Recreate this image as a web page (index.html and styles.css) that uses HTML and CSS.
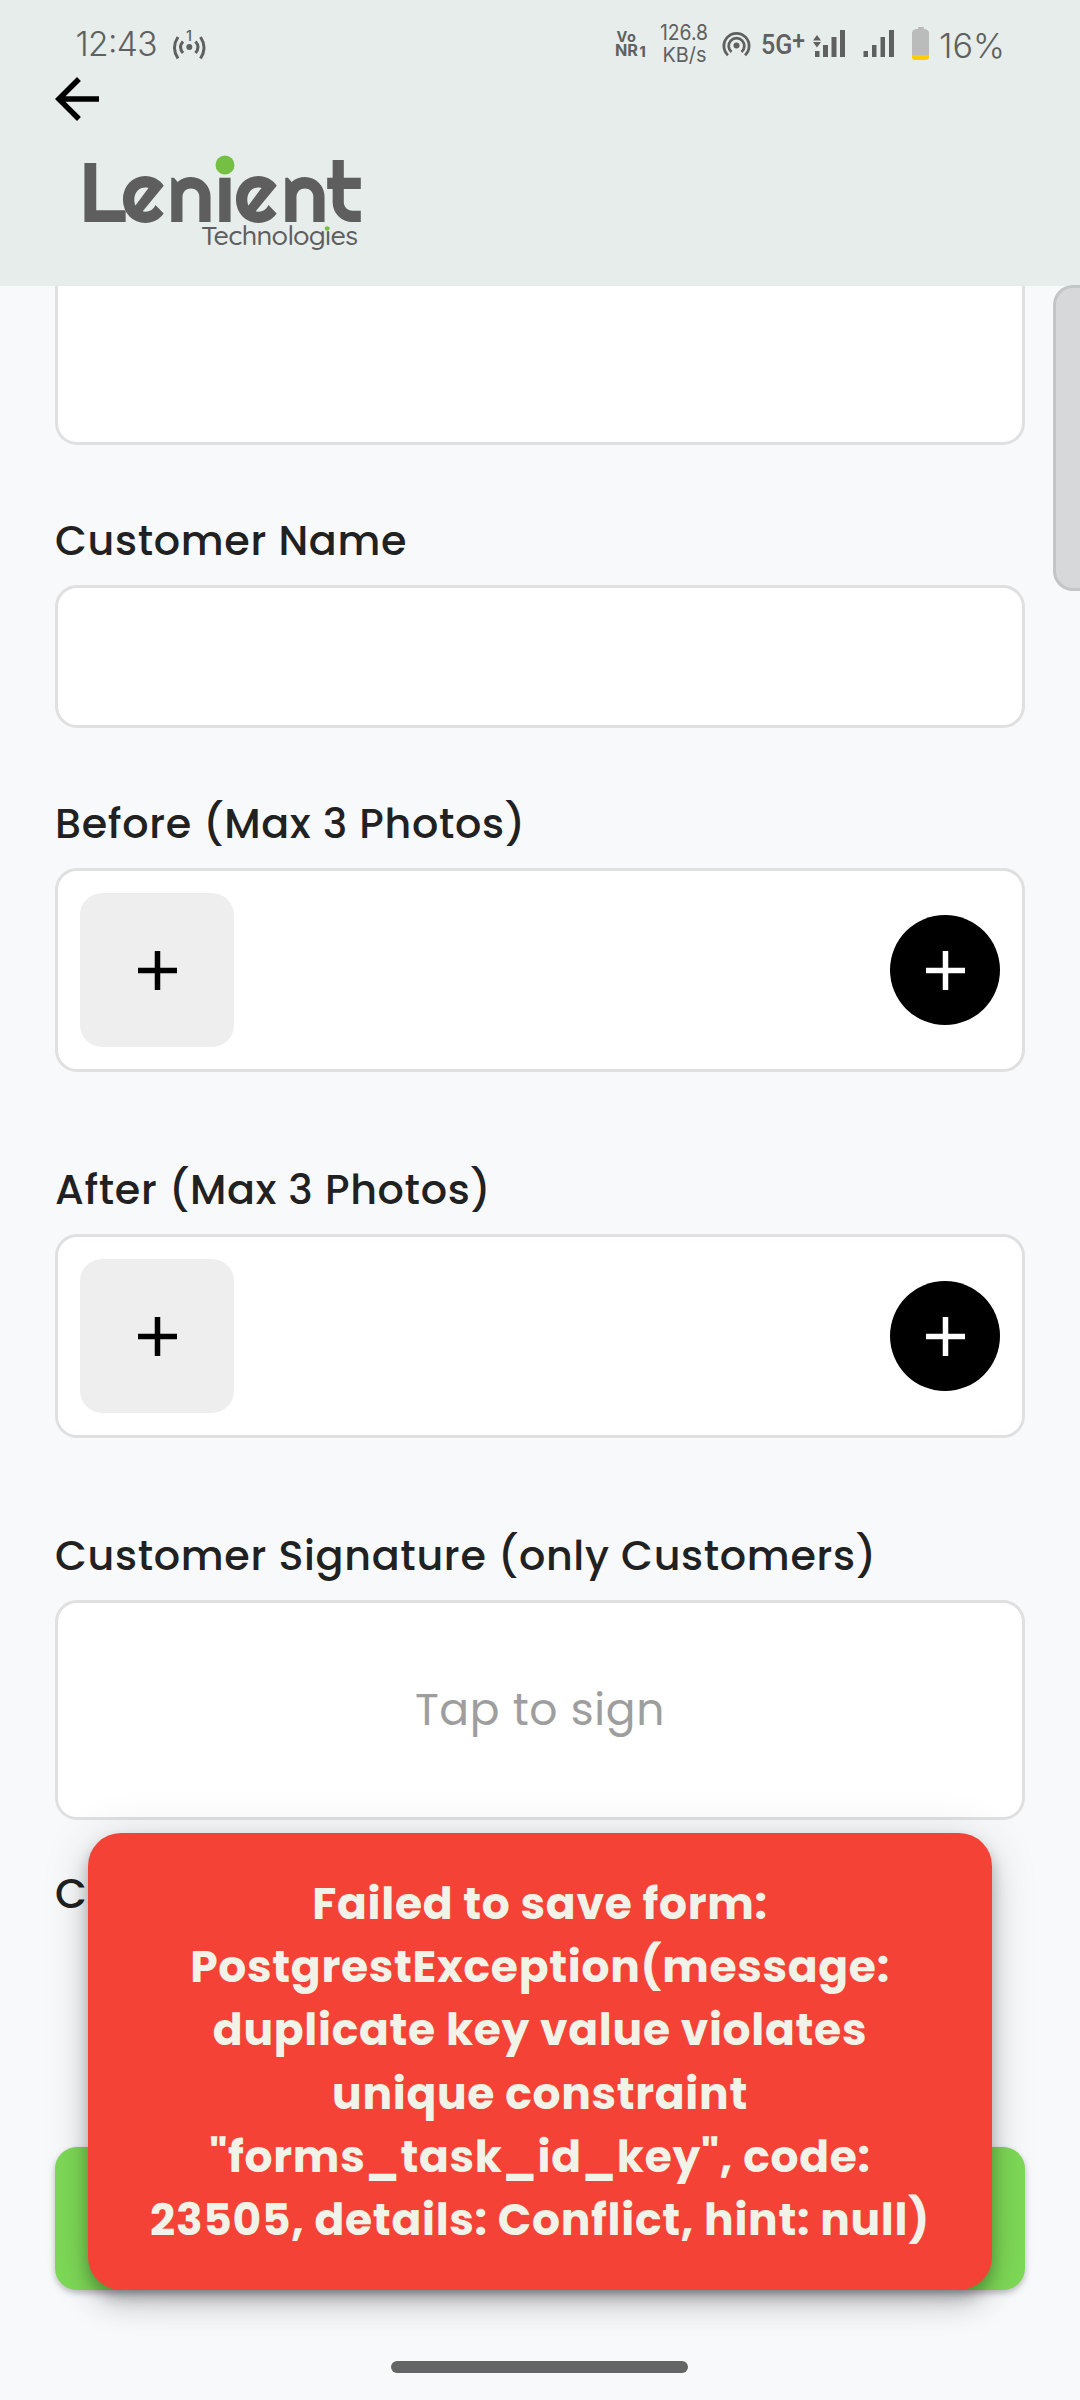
FILE: index.html
```html
<!DOCTYPE html>
<html lang="en">
<head>
<meta charset="utf-8">
<title>Lenient Technologies</title>
<link rel="stylesheet" href="styles.css">
</head>
<body>
<div class="screen">
  <header class="header">
    <div class="status">
      <svg class="status-left" width="150" height="66" viewBox="70 0 150 66">
        <text x="75.500" y="56" font-size="33.500" font-weight="300" textLength="82">12:43</text>
        <text x="189" y="41" font-size="14.500" font-weight="500" text-anchor="middle">1</text>
        <circle cx="189.300" cy="47" r="3"/>
        <g class="line" stroke-width="3">
          <path d="M183 41.500Q178 47 183 53M178 37Q171 47.500 178 58.500M195.500 41.500Q200.500 47 195.500 53M200.500 37Q207.500 47.500 200.500 58.500"/>
        </g>
      </svg>
      <svg class="status-right" width="400" height="66" viewBox="610 0 400 66">
        <text x="616.500" y="42" font-size="14.500" font-weight="700" textLength="19.500">Vo</text>
        <text x="615" y="56" font-size="15.500" font-weight="700" textLength="23" lengthAdjust="spacingAndGlyphs">NR</text>
        <text x="639.500" y="56.500" font-size="14" font-weight="800">1</text>
        <text x="660" y="40" font-size="21" textLength="48" lengthAdjust="spacingAndGlyphs">126.8</text>
        <text x="662.500" y="61.500" font-size="20.500" textLength="44" lengthAdjust="spacingAndGlyphs">KB/s</text>
        <circle cx="736.500" cy="45.500" r="3"/>
        <g class="line" stroke-width="2.800">
          <path d="M731.500 52A7.800 7.800 0 1 1 741.500 52M728 55.200A12.600 12.600 0 1 1 745 55.200"/>
        </g>
        <text class="network" x="761" y="53.500" font-size="28.500" font-weight="500" textLength="44" lengthAdjust="spacingAndGlyphs">5G<tspan dy="-5" font-size="26">+</tspan></text>
        <path d="M813 40.500l4-5.500 4 5.500zM813 42l4 5.500 4-5.500zM815 51h4.500v6h-4.500zM823 45h5v12h-5zM831.500 37h5v20h-5zM840 30h5v27h-5z"/>
        <path d="M863.500 51h4.500v6h-4.500zM872 45h4.500v12h-4.500zM880.500 37h4.500v20h-4.500zM889 30h5v27h-5z"/>
        <path class="battery" d="M918 28q0-1 1-1h4q1 0 1 1v1h1q4 1 4 4v22h-17v-22q0-3 4-4h2z"/>
        <path class="battery-level" d="M912 55h17v2q0 3-3 3h-11q-3 0-3-3z"/>
        <text x="939" y="58" font-size="33.500" font-weight="300" textLength="66" lengthAdjust="spacingAndGlyphs">16%</text>
      </svg>
    </div>
    <svg class="back" width="66" height="66" viewBox="0 0 24 24"><path d="M20 11H7.830l5.590-5.590L12 4l-8 8 8 8 1.410-1.410L7.830 13H20v-2z"/></svg>
    <svg class="logo" width="300" height="140" viewBox="70 132 300 140">
      <text class="logo-name" x="79 121 167 215 234 281 326" y="222">Lenient</text>
      <circle class="accent" cx="225" cy="165" r="9.500"/>
      <text class="logo-sub" x="201" y="245" textLength="157">Technologies</text>
      <circle class="accent" cx="327" cy="228.500" r="2.200"/>
    </svg>
  </header>

  <main class="form">
    <div class="box box-cut"></div>

    <section class="field">
      <div class="label">Customer Name</div>
      <div class="box box-input"></div>
    </section>

    <section class="field">
      <div class="label">Before (Max 3 Photos)</div>
      <div class="box photos">
        <div class="tile"><svg width="39" height="39" viewBox="0 0 39 39"><path d="M0 19.500H39M19.500 0V39"/></svg></div>
        <div class="add"><svg width="39" height="39" viewBox="0 0 39 39"><path d="M0 19.500H39M19.500 0V39"/></svg></div>
      </div>
    </section>

    <section class="field wide">
      <div class="label">After (Max 3 Photos)</div>
      <div class="box photos">
        <div class="tile"><svg width="39" height="39" viewBox="0 0 39 39"><path d="M0 19.500H39M19.500 0V39"/></svg></div>
        <div class="add"><svg width="39" height="39" viewBox="0 0 39 39"><path d="M0 19.500H39M19.500 0V39"/></svg></div>
      </div>
    </section>

    <section class="field wide">
      <div class="label">Customer Signature (only Customers)</div>
      <div class="box sign">Tap to sign</div>
    </section>

    <div class="label label-last">C</div>
    <div class="submit"></div>
  </main>

  <div class="home-bar"></div>
  <div class="scroll-thumb"></div>

  <div class="toast">Failed to save form: PostgrestException(message: duplicate key value violates unique constraint "forms_task_id_key", code: 23505, details: Conflict, hint: null)</div>
</div>
</body>
</html>
```
FILE: styles.css
```css
* { box-sizing: border-box; }

body {
  margin: 0;
  font-family: Poppins, Inter, sans-serif;
  letter-spacing: 0.6875px;
}

svg {
  display: block;
  letter-spacing: 0;
}

.screen {
  position: relative;
  display: flex;
  flex-direction: column;
  width: 1080px;
  height: 2400px;
  overflow: hidden;
  background: #f8f9fb;
}

/* Header */
.header {
  height: 286px;
  background: #e7edeb;
}

.status {
  display: flex;
  justify-content: space-between;
  padding: 0 70px;
  fill: #5f6160;
  font-family: Inter, sans-serif;
}

.network { font-family: Roboto, sans-serif; }
.line { fill: none; stroke: #5f6160; }
.battery { fill: #b9bcbb; }
.battery-level { fill: #ffcc00; }

.back { margin-left: 44px; }

.logo { margin-left: 70px; fill: #5e5e5e; }
.logo-name { font: 400 84px Righteous, Lato, sans-serif; }
.logo-sub { font: 500 27px Quicksand, Inter, sans-serif; }
.accent { fill: #75c043; }

/* Form */
.form {
  display: flex;
  flex-direction: column;
  padding: 0 55px;
}

.box {
  background: #fff;
  border: 3px solid #e0e0e0;
  border-radius: 22px;
}

.box-cut {
  height: 159px;
  border-top: 0;
  border-radius: 0 0 22px 22px;
}

.field {
  display: flex;
  flex-direction: column;
  gap: 13px;
  margin-top: 64px;
}

.wide { margin-top: 86px; }

.label {
  height: 63px;
  font-size: 41.25px;
  font-weight: 500;
  line-height: 64px;
  color: #212121;
  white-space: nowrap;
}

.box-input { height: 143px; }

.photos {
  display: flex;
  align-items: center;
  justify-content: space-between;
  height: 204px;
  padding: 22px;
}

.tile, .add {
  display: flex;
  align-items: center;
  justify-content: center;
  fill: none;
  stroke-width: 5.5px;
}

.tile {
  width: 154px;
  height: 154px;
  border-radius: 22px;
  background: #eeeeee;
  stroke: #000;
}

.add {
  width: 110px;
  height: 110px;
  border-radius: 50%;
  background: #000;
  stroke: #fff;
}

.sign {
  display: flex;
  align-items: center;
  justify-content: center;
  height: 220px;
  padding-bottom: 1px;
  font-size: 44px;
  color: #9e9e9e;
}

.label-last { margin-top: 42px; }

.submit {
  height: 143px;
  margin-top: 222px;
  border-radius: 22px;
  background: #7ed957;
  box-shadow: 0 3px 6px rgba(0, 0, 0, 0.25);
}

/* Overlays */
.home-bar {
  width: 297px;
  height: 12px;
  margin: 71px 0 0 391px;
  border-radius: 6px;
  background: #646665;
}

.scroll-thumb {
  position: absolute;
  top: 285px;
  right: 0;
  width: 27px;
  height: 306px;
  border: 3px solid #c4c5c7;
  border-right: 0;
  border-radius: 20px 0 0 20px;
  background: #d7d8da;
}

.toast {
  position: absolute;
  top: 1833px;
  left: 88px;
  width: 904px;
  height: 457px;
  padding: 39px 55px 0;
  border-radius: 33px;
  background: #f44336;
  box-shadow: 0 8px 14px rgba(0, 0, 0, 0.2), 0 16px 28px rgba(0, 0, 0, 0.14), 0 3px 50px rgba(0, 0, 0, 0.12);
  color: #f1f3e9;
  font-size: 44px;
  font-weight: 700;
  line-height: 63.2px;
  text-align: center;
}
```
